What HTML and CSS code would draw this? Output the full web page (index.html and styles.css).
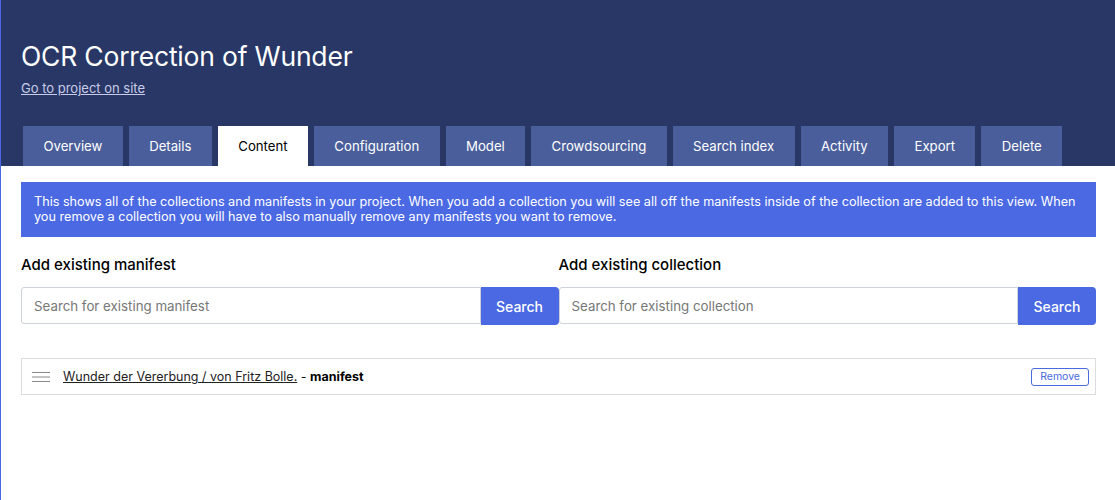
FILE: index.html
```html
<!DOCTYPE html>
<html>
<head>
<meta charset="utf-8">
<link rel="stylesheet" href="styles.css">
</head>
<body>
<div class="page">
  <header class="header">
    <h1 class="title">OCR Correction of Wunder</h1>
    <a class="site-link" href="#">Go to project on site</a>
    <nav class="tabs">
      <a class="tab" href="#">Overview</a>
      <a class="tab" href="#">Details</a>
      <a class="tab active" href="#">Content</a>
      <a class="tab" href="#">Configuration</a>
      <a class="tab" href="#">Model</a>
      <a class="tab" href="#">Crowdsourcing</a>
      <a class="tab" href="#">Search index</a>
      <a class="tab" href="#">Activity</a>
      <a class="tab" href="#">Export</a>
      <a class="tab" href="#">Delete</a>
    </nav>
  </header>
  <main class="content">
    <div class="notice">This shows all of the collections and manifests in your project. When you add a collection you will see all off the manifests inside of the collection are added to this view. When you remove a collection you will have to also manually remove any manifests you want to remove.</div>
    <div class="search-row">
      <div class="search-col">
        <h3 class="search-title">Add existing manifest</h3>
        <div class="search-group">
          <input class="search-input" type="text" placeholder="Search for existing manifest">
          <button class="search-btn">Search</button>
        </div>
      </div>
      <div class="search-col">
        <h3 class="search-title">Add existing collection</h3>
        <div class="search-group">
          <input class="search-input" type="text" placeholder="Search for existing collection">
          <button class="search-btn">Search</button>
        </div>
      </div>
    </div>
    <div class="list">
      <div class="list-item">
        <svg class="handle" width="18" height="12" viewBox="0 0 18 12"><path d="M0 1.5H18M0 6H18M0 10.5H18" stroke="#8a8a8a" stroke-width="1"/></svg>
        <span class="item-label"><a class="item-link" href="#">Wunder der Vererbung / von Fritz Bolle.</a> - <strong>manifest</strong></span>
        <button class="remove-btn">Remove</button>
      </div>
    </div>
  </main>
</div>
</body>
</html>
```

FILE: styles.css
```css
* { box-sizing: border-box; }
html, body { margin: 0; padding: 0; }
body {
  font-family: Inter, "Noto Sans", sans-serif;
  background: #fff;
  color: #000;
}
.page {
  min-height: 500px;
  border-left: 1px solid #4a67e3;
}
.header {
  background: #283766;
  padding: 39px 0 0 20px;
}
.title {
  margin: 0;
  font-size: 26.5px;
  font-weight: 400;
  color: #fff;
  line-height: 34px;
  letter-spacing: -0.2px;
}
.site-link {
  display: inline-block;
  margin-top: 7px;
  font-size: 13px;
  color: #c9cce8;
  line-height: 16px;
}
.tabs {
  display: flex;
  gap: 6px;
  margin-top: 29px;
  padding-left: 2px;
}
.tab {
  display: block;
  height: 40px;
  line-height: 40px;
  padding: 0 20.4px;
  background: #4a5e9b;
  color: #fff;
  font-size: 13.2px;
  text-decoration: none;
}
.tab.active {
  background: #fff;
  color: #000;
}
.content {
  padding: 16px 19px 0 20px;
}
.notice {
  background: #4a69e3;
  color: #fff;
  font-size: 12.65px;
  line-height: 15px;
  padding: 12px 13px 13px;
}
.search-row {
  display: grid;
  grid-template-columns: 1fr 1fr;
  margin-top: 18px;
}
.search-title {
  margin: 0 0 13px;
  font-size: 15px;
  font-weight: 500;
  line-height: 19px;
}
.search-group {
  display: flex;
  height: 37px;
}
.search-input {
  flex: 1;
  min-width: 0;
  height: 37px;
  border: 1px solid #cdd1d8;
  border-radius: 3px 0 0 3px;
  padding: 0 12px;
  font-family: inherit;
  font-size: 13.3px;
  color: #333;
}
.search-input::placeholder { color: #777; }
.search-btn {
  width: 78px;
  height: 38px;
  border: none;
  background: #4a69e3;
  color: #fff;
  font-family: inherit;
  font-size: 14px;
  font-weight: 500;
  border-radius: 0 4px 4px 0;
  padding: 0;
}
.list {
  margin-top: 34px;
}
.list-item {
  display: flex;
  align-items: center;
  height: 37px;
  border: 1px solid #dcdcdc;
  padding: 0 6px 0 10px;
}
.handle { flex: none; }
.item-label {
  margin-left: 13px;
  font-size: 12.5px;
  color: #111;
  flex: 1;
}
.item-link { color: #222; }
.item-label strong { font-weight: 700; color: #000; }
.remove-btn {
  height: 18px;
  padding: 0 8px;
  border: 1px solid #4a69e3;
  border-radius: 3px;
  background: #fff;
  color: #4a69e3;
  font-family: inherit;
  font-size: 10.5px;
  line-height: 16px;
}
```
